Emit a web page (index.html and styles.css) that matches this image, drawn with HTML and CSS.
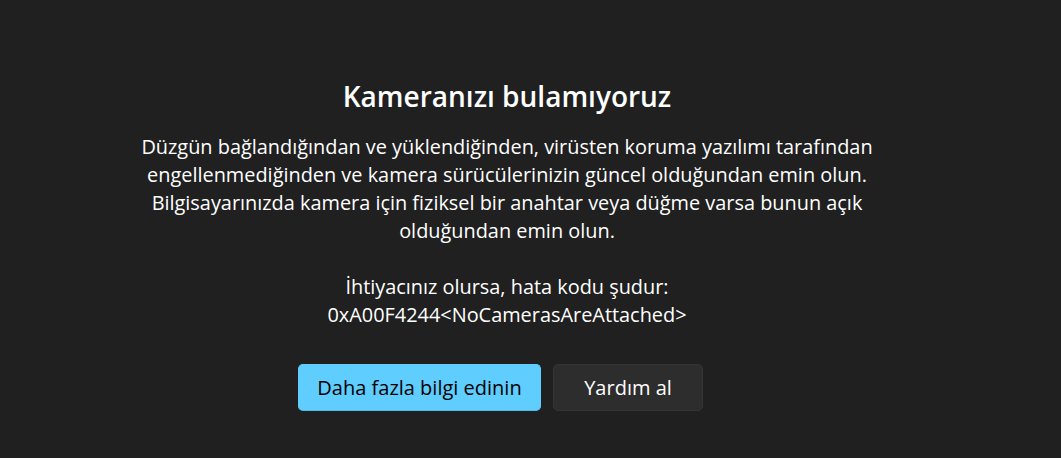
FILE: index.html
```html
<!DOCTYPE html>
<html lang="tr">
<head>
<meta charset="utf-8">
<link rel="stylesheet" href="styles.css">
</head>
<body>
<main class="page">
  <section class="panel">
    <h1 class="title">Kameranızı bulamıyoruz</h1>
    <p class="text">Düzgün bağlandığından ve yüklendiğinden, virüsten koruma yazılımı tarafından<br>engellenmediğinden ve kamera sürücülerinizin güncel olduğundan emin olun.<br>Bilgisayarınızda kamera için fiziksel bir anahtar veya düğme varsa bunun açık<br>olduğundan emin olun.</p>
    <p class="text code">İhtiyacınız olursa, hata kodu şudur:<br>0xA00F4244&lt;NoCamerasAreAttached&gt;</p>
    <div class="actions">
      <button class="btn btn-primary">Daha fazla bilgi edinin</button>
      <button class="btn btn-secondary">Yardım al</button>
    </div>
  </section>
</main>
</body>
</html>
```
FILE: styles.css
```css
html, body {
  margin: 0;
  padding: 0;
  background: #202020;
  height: 100%;
}
body {
  font-family: "Open Sans", "Noto Sans", sans-serif;
  color: #ffffff;
}
.page {
  display: flex;
  justify-content: center;
  padding: 76px 47px 0 0;
}
.panel {
  display: flex;
  flex-direction: column;
  align-items: center;
  text-align: center;
}
.title {
  margin: 0;
  font-size: 28px;
  font-weight: 600;
  line-height: 40px;
}
.text {
  margin: 17px 0 0;
  font-size: 19.9px;
  line-height: 28px;
}
.code {
  margin-top: 28px;
}
.actions {
  display: flex;
  gap: 12px;
  margin: 35px 13px 0 0;
}
.btn {
  font-family: inherit;
  font-size: 20px;
  height: 47px;
  border-radius: 5px;
  padding: 0;
  white-space: nowrap;
  cursor: pointer;
}
.btn-primary {
  background: #60cdff;
  color: #000000;
  border: 1px solid #60cdff;
  border-bottom-color: #56b8e6;
  width: 243px;
}
.btn-secondary {
  background: #2d2d2d;
  color: #ffffff;
  border: 1px solid #353535;
  width: 150px;
}
```
